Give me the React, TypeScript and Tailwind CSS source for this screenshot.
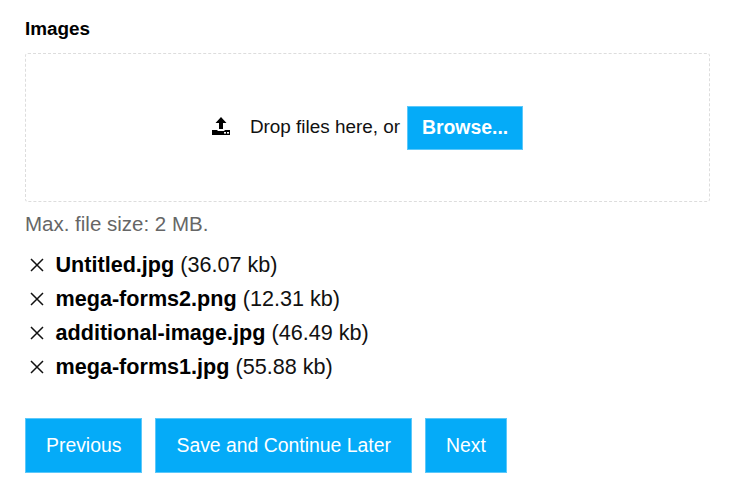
const files = [
  { name: "Untitled.jpg", size: "(36.07 kb)" },
  { name: "mega-forms2.png", size: "(12.31 kb)" },
  { name: "additional-image.jpg", size: "(46.49 kb)" },
  { name: "mega-forms1.jpg", size: "(55.88 kb)" },
];

const UploadIcon = () => (
  <svg width="18" height="18" viewBox="0 0 18 18" className="shrink-0 -mt-[4px]">
    <path d="M9 0 L14.5 6 L11 6 L11 12 L7 12 L7 6 L3.5 6 Z" fill="#000" />
    <path d="M0 13 L5.5 13 L5.5 14 L12.5 14 L12.5 13 L18 13 L18 18 L0 18 Z" fill="#000" />
    <rect x="12" y="15" width="2" height="1.6" fill="#fff" />
    <rect x="15" y="15" width="2" height="1.6" fill="#fff" />
  </svg>
);

const CloseIcon = () => (
  <svg width="14" height="14" viewBox="0 0 14 14" className="shrink-0">
    <path d="M1 1 L13 13 M13 1 L1 13" stroke="#111" strokeWidth="1.5" fill="none" />
  </svg>
);

const NavButton = ({ label }: { label: string }) => (
  <button className="h-[55px] px-[20px] pt-[1px] bg-[#05abf8] border border-[#5cc8fa] text-white text-[19.4px]">
    {label}
  </button>
);

export default function App() {
  return (
    <div className="min-h-[503px] bg-white px-[25px] pt-[19px] font-['Liberation_Sans',Arial,sans-serif] text-[#111]">
      <div className="text-[18.9px] leading-[20px] font-bold text-black">Images</div>

      <div className="mt-[14px] w-[685px] h-[149px] border border-dashed border-[#dddddd] rounded-[3px] flex items-center justify-center">
        <UploadIcon />
        <span className="ml-[20px] text-[18.9px]">Drop files here, or</span>
        <button className="ml-[7px] w-[116px] h-[44px] bg-[#05abf8] border border-[#5cc8fa] text-white text-[19.4px] font-bold">
          Browse...
        </button>
      </div>

      <div className="mt-[11px] text-[20.5px] leading-[22px] text-[#666666]">Max. file size: 2 MB.</div>

      <ul className="mt-[13px] pl-[5px] flex flex-col">
        {files.map((file) => (
          <li key={file.name} className="h-[34px] flex items-center text-[21.6px]">
            <CloseIcon />
            <span className="ml-[11.5px]">
              <b className="font-bold text-black">{file.name}</b> {file.size}
            </span>
          </li>
        ))}
      </ul>

      <div className="mt-[34px] flex gap-[13px]">
        <NavButton label="Previous" />
        <NavButton label="Save and Continue Later" />
        <NavButton label="Next" />
      </div>
    </div>
  );
}
